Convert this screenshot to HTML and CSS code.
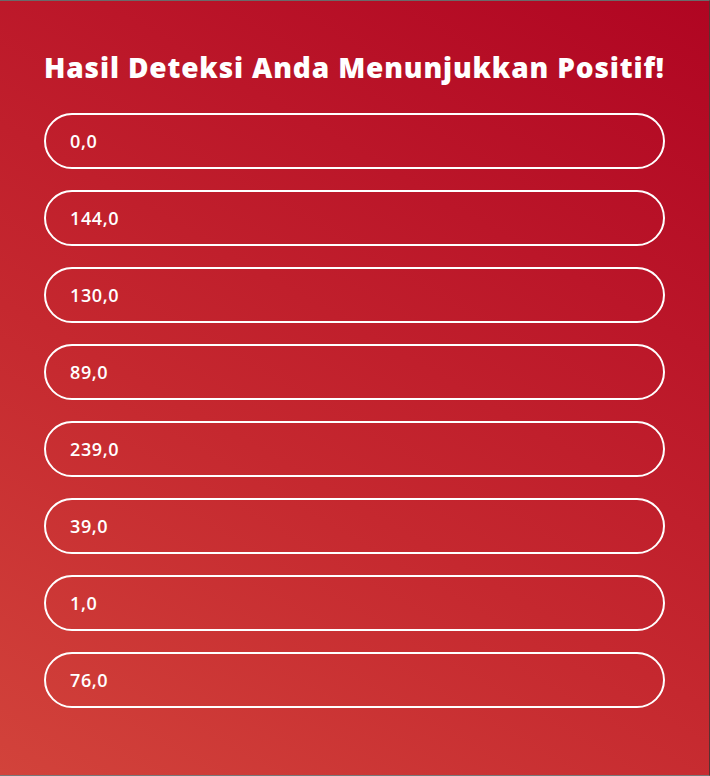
FILE: index.html
```html
<!DOCTYPE html>
<html lang="id">
<head>
<meta charset="utf-8">
<title>Hasil Deteksi</title>
<link rel="stylesheet" href="styles.css">
</head>
<body>
<section class="result">
  <h1 class="result-title">Hasil Deteksi Anda Menunjukkan Positif!</h1>
  <div class="result-list">
    <div class="pill">0,0</div>
    <div class="pill">144,0</div>
    <div class="pill">130,0</div>
    <div class="pill">89,0</div>
    <div class="pill">239,0</div>
    <div class="pill">39,0</div>
    <div class="pill">1,0</div>
    <div class="pill">76,0</div>
  </div>
</section>
</body>
</html>
```
FILE: styles.css
```css
* { box-sizing: border-box; }
html, body { margin: 0; padding: 0; }
body {
  width: 710px;
  height: 776px;
  font-family: "Open Sans", "Liberation Sans", sans-serif;
  background: #6e6e6e;
}
.result {
  width: 710px;
  height: 776px;
  border-top: 1px solid #6a6a6a;
  border-bottom: 1px solid #787878;
  border-right: 1px solid #5b3030;
  background: linear-gradient(30deg, #d2433b 0%, #c5282f 40%, #bb1629 70%, #b00522 100%);
  padding: 44px 44px 0 44px;
  color: #fff;
}
.result-title {
  margin: 0 0 24px 0;
  font-size: 28px;
  line-height: 44px;
  font-weight: 800;
  letter-spacing: 0.85px;
  white-space: nowrap;
}
.result-list {
  display: flex;
  flex-direction: column;
  gap: 21px;
  width: 621px;
}
.pill {
  height: 56px;
  border: 2px solid #fff;
  border-radius: 28px;
  padding: 0 24px;
  display: flex;
  align-items: center;
  font-size: 18px;
  font-weight: 600;
  letter-spacing: 0.6px;
}
```
